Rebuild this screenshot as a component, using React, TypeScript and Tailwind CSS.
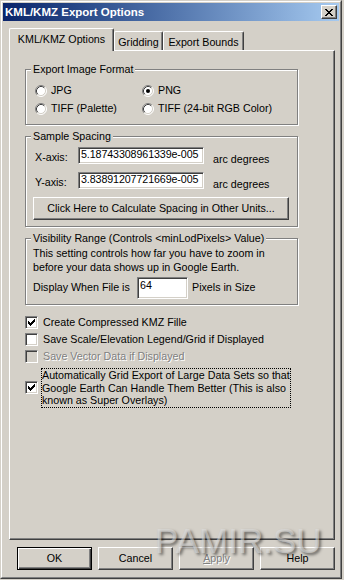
import React from "react";

const raised =
  "border border-t-white border-l-white border-r-[#404040] border-b-[#404040] shadow-[inset_-1px_-1px_0_#808080]";
const sunken =
  "border border-t-[#808080] border-l-[#808080] border-r-white border-b-white shadow-[inset_1px_1px_0_#404040,inset_-1px_-1px_0_#d4d0c8]";

function Radio({ checked }: { checked?: boolean }) {
  return (
    <svg width="12" height="12" viewBox="0 0 12 12" className="shrink-0">
      <circle cx="6" cy="6" r="5" fill="#fff" />
      <path d="M2.11 9.89A5.5 5.5 0 0 1 9.89 2.11" fill="none" stroke="#808080" />
      <path d="M9.89 2.11A5.5 5.5 0 0 1 2.11 9.89" fill="none" stroke="#fff" />
      <path d="M2.82 9.18A4.5 4.5 0 0 1 9.18 2.82" fill="none" stroke="#404040" />
      <path d="M9.18 2.82A4.5 4.5 0 0 1 2.82 9.18" fill="none" stroke="#d4d0c8" />
      {checked && <circle cx="6" cy="6" r="2" fill="#000" />}
    </svg>
  );
}

function Check({ checked, disabled }: { checked?: boolean; disabled?: boolean }) {
  return (
    <div
      className={`w-[13px] h-[13px] shrink-0 flex items-center justify-center ${sunken} ${
        disabled ? "bg-[#d4d0c8]" : "bg-white"
      }`}
    >
      {checked && (
        <svg width="7" height="7" viewBox="0 0 7 7" shapeRendering="crispEdges">
          <path
            d="M6 0h1v1h-1z M5 1h2v1h-2z M0 2h1v1h-1z M4 2h3v1h-3z M0 3h2v1h-2z M3 3h3v1h-3z M0 4h5v1h-5z M1 5h3v1h-3z M2 6h1v1h-1z"
            fill="#000"
          />
        </svg>
      )}
    </div>
  );
}

function Group({
  label,
  className,
  children,
}: {
  label: string;
  className: string;
  children?: React.ReactNode;
}) {
  return (
    <div
      className={`relative border border-[#808080] shadow-[inset_1px_1px_0_#fff,1px_1px_0_#fff] ${className}`}
    >
      <span className="absolute left-[5px] top-[-7px] bg-[#d4d0c8] px-[2px] leading-[13px] whitespace-nowrap">
        {label}
      </span>
      {children}
    </div>
  );
}

function Tab({ label, active, w }: { label: string; active?: boolean; w: string }) {
  return (
    <div
      className={`${w} ${
        active ? "h-[23px] -mb-px relative z-10 pt-[4px]" : "h-[19px] pt-[4px]"
      } bg-[#d4d0c8] border-t border-l border-r border-t-white border-l-white border-r-[#404040] shadow-[inset_-1px_0_0_#808080] rounded-tl-[2px] rounded-tr-[2px] text-center leading-[13px] whitespace-nowrap`}
    >
      {label}
    </div>
  );
}

function Btn({
  children,
  def,
  disabled,
}: {
  children: React.ReactNode;
  def?: boolean;
  disabled?: boolean;
}) {
  return (
    <div
      className={`w-[75px] h-[23px] flex items-center justify-center leading-[13px] ${
        def
          ? "border border-black shadow-[inset_1px_1px_0_#fff,inset_-1px_-1px_0_#404040,inset_-2px_-2px_0_#808080]"
          : raised
      } ${disabled ? "text-[#808080] [text-shadow:1px_1px_0_#fff]" : "text-black"}`}
    >
      {children}
    </div>
  );
}

export default function App() {
  return (
    <div className="w-[344px] h-[580px] bg-[#d4d0c8] font-['Liberation_Sans',Arial,sans-serif] text-[10.7px] text-black relative overflow-hidden">
      <div className="w-[342px] h-[579px] border border-t-[#d4d0c8] border-l-[#d4d0c8] border-r-[#404040] border-b-[#404040]">
        <div className="w-full h-full border border-t-white border-l-white border-r-[#808080] border-b-[#808080] p-px flex flex-col">
          {/* Title bar */}
          <div className="h-[18px] shrink-0 bg-gradient-to-r from-[#0a246a] to-[#a6caf0] flex items-center justify-between pl-[2px] pr-[2px]">
            <span className="text-white font-bold text-[11.5px] leading-[14px] whitespace-nowrap">
              KML/KMZ Export Options
            </span>
            <div className={`w-[16px] h-[14px] bg-[#d4d0c8] flex items-center justify-center ${raised}`}>
              <svg width="8" height="7" viewBox="0 0 8 7" shapeRendering="crispEdges">
                <path
                  d="M0 0h2v1h-2z M6 0h2v1h-2z M1 1h2v1h-2z M5 1h2v1h-2z M2 2h4v1h-4z M3 3h2v1h-2z M2 4h4v1h-4z M1 5h2v1h-2z M5 5h2v1h-2z M0 6h2v1h-2z M6 6h2v1h-2z"
                  fill="#000"
                />
              </svg>
            </div>
          </div>

          {/* Tabs */}
          <div className="mt-[7px] ml-[6px] h-[22px] flex items-end shrink-0">
            <Tab label="KML/KMZ Options" active w="w-[105px]" />
            <Tab label="Gridding" w="w-[49px]" />
            <Tab label="Export Bounds" w="w-[81px]" />
          </div>

          {/* Panel */}
          <div className={`ml-[6px] w-[326px] h-[490px] shrink-0 ${raised} flex flex-col`}>
            <Group label="Export Image Format" className="mt-[18px] ml-[15px] w-[273px] h-[56px] pt-[14px] pl-[9px]">
              <div className="grid grid-cols-[107px_1fr] gap-y-[5px]">
                <div className="h-[13px] flex items-center gap-[4px]">
                  <Radio />
                  <span className="leading-[13px]">JPG</span>
                </div>
                <div className="h-[13px] flex items-center gap-[4px]">
                  <Radio checked />
                  <span className="leading-[13px]">PNG</span>
                </div>
                <div className="h-[13px] flex items-center gap-[4px]">
                  <Radio />
                  <span className="leading-[13px]">TIFF (Palette)</span>
                </div>
                <div className="h-[13px] flex items-center gap-[4px]">
                  <Radio />
                  <span className="leading-[13px] whitespace-nowrap">TIFF (24-bit RGB Color)</span>
                </div>
              </div>
            </Group>

            <Group label="Sample Spacing" className="mt-[11px] ml-[15px] w-[273px] h-[91px] pt-[10px] pl-[9px]">
              <div className="flex items-start h-[17px]">
                <span className="w-[43px] mt-[4px] leading-[13px]">X-axis:</span>
                <div className={`w-[126px] h-[17px] bg-white pl-[2px] leading-[13px] whitespace-nowrap overflow-hidden tracking-[-0.1px] ${sunken}`}>
                  5.18743308961339e-005
                </div>
                <span className="ml-[9px] mt-[6px] leading-[13px] whitespace-nowrap">arc degrees</span>
              </div>
              <div className="flex items-start h-[17px] mt-[8px]">
                <span className="w-[43px] mt-[4px] leading-[13px]">Y-axis:</span>
                <div className={`w-[126px] h-[17px] bg-white pl-[2px] leading-[13px] whitespace-nowrap overflow-hidden tracking-[-0.1px] ${sunken}`}>
                  3.83891207721669e-005
                </div>
                <span className="ml-[9px] mt-[6px] leading-[13px] whitespace-nowrap">arc degrees</span>
              </div>
              <div className={`mt-[8px] -ml-[2px] w-[256px] h-[23px] flex items-center justify-center leading-[13px] whitespace-nowrap ${raised}`}>
                Click Here to Calculate Spacing in Other Units...
              </div>
            </Group>

            <Group
              label="Visibility Range (Controls <minLodPixels> Value)"
              className="mt-[11px] ml-[15px] w-[273px] h-[67px] pt-[7px] pl-[7px]"
            >
              <div className="leading-[14px] whitespace-nowrap">
                This setting controls how far you have to zoom in
                <br />
                before your data shows up in Google Earth.
              </div>
              <div className="flex items-start mt-[3px]">
                <span className="w-[104px] mt-[4px] leading-[13px] whitespace-nowrap">Display When File is</span>
                <div className={`w-[51px] h-[22px] bg-white pl-[2px] pt-px leading-[13px] ${sunken}`}>64</div>
                <span className="ml-[4px] mt-[4px] leading-[13px] whitespace-nowrap">Pixels in Size</span>
              </div>
            </Group>

            <div className="mt-[11px] ml-[15px] flex flex-col">
              <div className="h-[13px] flex items-center gap-[5px]">
                <Check checked />
                <span className="leading-[13px] whitespace-nowrap">Create Compressed KMZ Fille</span>
              </div>
              <div className="h-[13px] mt-[4px] flex items-center gap-[5px]">
                <Check />
                <span className="leading-[13px] whitespace-nowrap">Save Scale/Elevation Legend/Grid if Displayed</span>
              </div>
              <div className="h-[13px] mt-[4px] flex items-center gap-[5px]">
                <Check disabled />
                <span className="leading-[13px] whitespace-nowrap text-[#808080] [text-shadow:1px_1px_0_#fff]">
                  Save Vector Data if Displayed
                </span>
              </div>
              <div className="mt-[5px] flex items-center gap-[3px]">
                <Check checked />
                <div className="w-[250px] border border-dotted border-black leading-[12.5px] whitespace-nowrap pl-0">
                  Automatically Grid Export of Large Data Sets so that
                  <br />
                  Google Earth Can Handle Them Better (This is also
                  <br />
                  known as Super Overlays)
                </div>
              </div>
            </div>
          </div>

          {/* Buttons */}
          <div className="mt-[7px] ml-[14px] flex gap-[6px] shrink-0">
            <Btn def>OK</Btn>
            <Btn>Cancel</Btn>
            <Btn disabled>
              <span>
                <span className="underline">A</span>pply
              </span>
            </Btn>
            <Btn>Help</Btn>
          </div>
        </div>
      </div>

      {/* Watermark */}
      <div className="absolute left-[155px] top-[523px] text-[35px] leading-none text-[rgba(225,225,225,0.55)] [text-shadow:2px_2px_3px_rgba(0,0,0,0.5)] pointer-events-none whitespace-nowrap">
        PAMIR.SU
      </div>
    </div>
  );
}
